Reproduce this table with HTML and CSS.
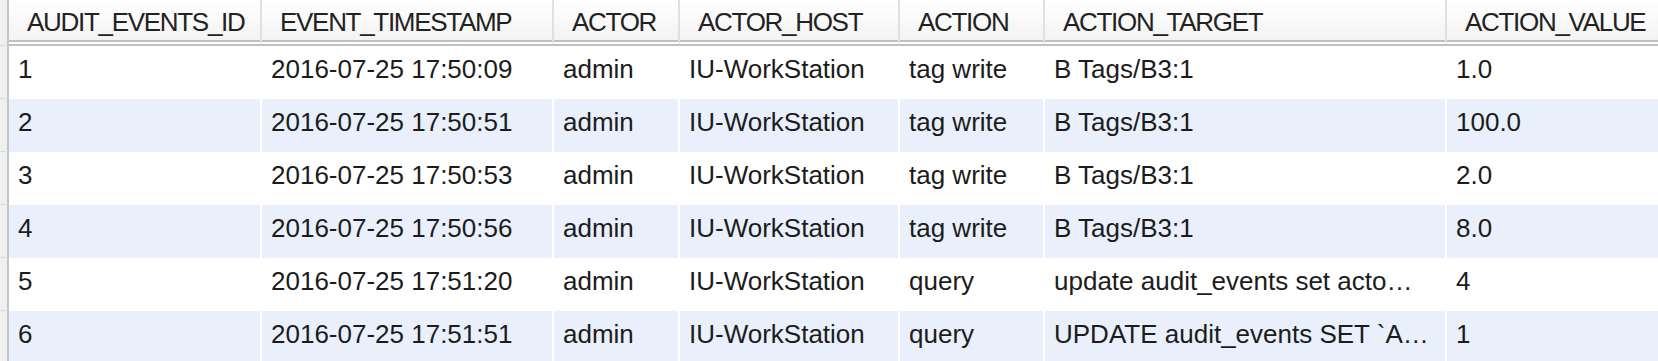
FILE: index.html
```html
<!DOCTYPE html>
<html lang="en">
<head>
    <meta charset="UTF-8">
    <title>audit_events</title>
    <link rel="stylesheet" href="styles.css">
</head>
<body>
    <div class="grid-wrap">
        <table class="result-grid">
            <colgroup>
                <col class="c-gutter">
                <col class="c-id">
                <col class="c-ts">
                <col class="c-actor">
                <col class="c-host">
                <col class="c-action">
                <col class="c-target">
                <col class="c-value">
            </colgroup>
            <thead>
                <tr>
                    <th class="gutter"></th>
                    <th>AUDIT_EVENTS_ID</th>
                    <th>EVENT_TIMESTAMP</th>
                    <th>ACTOR</th>
                    <th>ACTOR_HOST</th>
                    <th>ACTION</th>
                    <th>ACTION_TARGET</th>
                    <th>ACTION_VALUE</th>
                </tr>
            </thead>
            <tbody>
                <tr>
                    <td class="gutter"></td>
                    <td>1</td>
                    <td>2016-07-25 17:50:09</td>
                    <td>admin</td>
                    <td>IU-WorkStation</td>
                    <td>tag write</td>
                    <td>B Tags/B3:1</td>
                    <td>1.0</td>
                </tr>
                <tr>
                    <td class="gutter"></td>
                    <td>2</td>
                    <td>2016-07-25 17:50:51</td>
                    <td>admin</td>
                    <td>IU-WorkStation</td>
                    <td>tag write</td>
                    <td>B Tags/B3:1</td>
                    <td>100.0</td>
                </tr>
                <tr>
                    <td class="gutter"></td>
                    <td>3</td>
                    <td>2016-07-25 17:50:53</td>
                    <td>admin</td>
                    <td>IU-WorkStation</td>
                    <td>tag write</td>
                    <td>B Tags/B3:1</td>
                    <td>2.0</td>
                </tr>
                <tr>
                    <td class="gutter"></td>
                    <td>4</td>
                    <td>2016-07-25 17:50:56</td>
                    <td>admin</td>
                    <td>IU-WorkStation</td>
                    <td>tag write</td>
                    <td>B Tags/B3:1</td>
                    <td>8.0</td>
                </tr>
                <tr>
                    <td class="gutter"></td>
                    <td>5</td>
                    <td>2016-07-25 17:51:20</td>
                    <td>admin</td>
                    <td>IU-WorkStation</td>
                    <td>query</td>
                    <td>update audit_events set acto…</td>
                    <td>4</td>
                </tr>
                <tr>
                    <td class="gutter"></td>
                    <td>6</td>
                    <td>2016-07-25 17:51:51</td>
                    <td>admin</td>
                    <td>IU-WorkStation</td>
                    <td>query</td>
                    <td>UPDATE audit_events SET `A…</td>
                    <td>1</td>
                </tr>
            </tbody>
        </table>
    </div>
</body>
</html>
```

FILE: styles.css
```css
* {
    margin: 0;
    padding: 0;
    box-sizing: border-box;
}

body {
    font-family: 'Liberation Sans', Arial, sans-serif;
    background: #ffffff;
    color: #1c1c1c;
    overflow: hidden;
}

.grid-wrap {
    width: 100%;
    height: 361px;
    overflow: hidden;
}

.result-grid {
    width: 100%;
    table-layout: fixed;
    border-collapse: separate;
    border-spacing: 0;
    font-size: 26px;
}

.c-gutter { width: 9px; }
.c-id { width: 253px; }
.c-ts { width: 292px; }
.c-actor { width: 126px; }
.c-host { width: 220px; }
.c-action { width: 145px; }
.c-target { width: 402px; }

/* header */
.result-grid th {
    height: 46px;
    padding: 5px 0 0 18px;
    text-align: left;
    font-weight: normal;
    letter-spacing: -1.3px;
    color: #222;
    white-space: nowrap;
    overflow: hidden;
    background: linear-gradient(#ffffff, #f3f3f3);
    border-right: 2px solid #e0e0e0;
    border-bottom: 6px double #c0c0c0;
}

.result-grid th:last-child {
    border-right: none;
}

/* rows */
.result-grid td {
    height: 53px;
    padding: 0 0 6px 9px;
    white-space: nowrap;
    overflow: hidden;
    text-overflow: ellipsis;
    border-right: 2px solid #ffffff;
}

.result-grid td:last-child {
    border-right: none;
}

.result-grid tbody tr:nth-child(even) td {
    background: #e9f0fb;
}

/* row header strip on the left */
.result-grid .gutter,
.result-grid tbody tr:nth-child(even) td.gutter {
    padding: 0;
    background: #f0f0f0;
    border-right: 2px solid #c4c4c4;
    border-bottom: 1px solid #dcdcdc;
}
```
